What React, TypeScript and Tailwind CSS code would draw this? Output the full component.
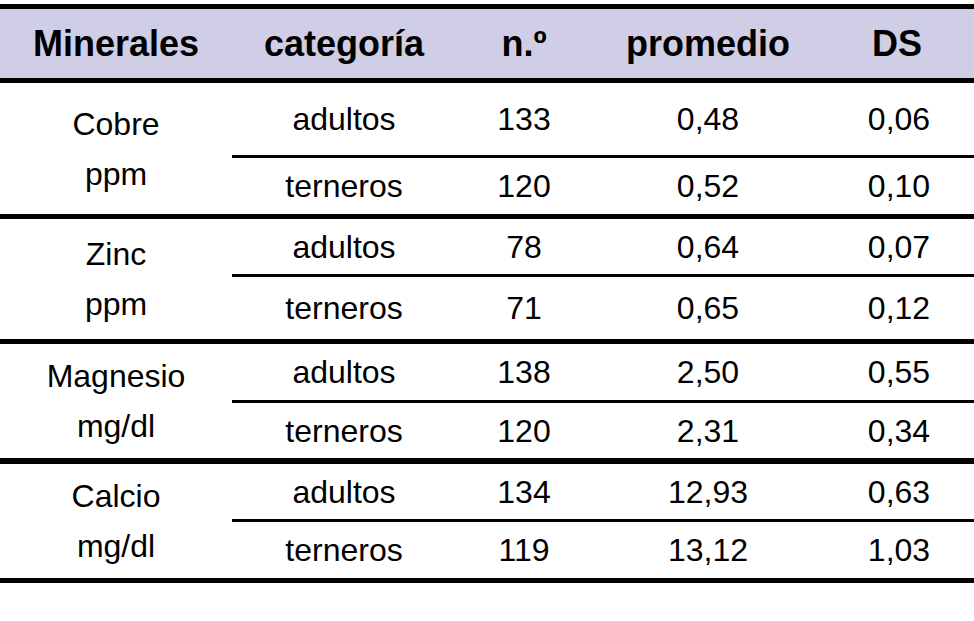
const groups = [
  {
    name: "Cobre",
    unit: "ppm",
    rows: [
      { cat: "adultos", n: "133", avg: "0,48", ds: "0,06", h: "h-[72px]" },
      { cat: "terneros", n: "120", avg: "0,52", ds: "0,10", h: "h-[59px]" },
    ],
    border: "border-b-[5px]",
  },
  {
    name: "Zinc",
    unit: "ppm",
    rows: [
      { cat: "adultos", n: "78", avg: "0,64", ds: "0,07", h: "h-[55px]" },
      { cat: "terneros", n: "71", avg: "0,65", ds: "0,12", h: "h-[65px]" },
    ],
    border: "border-b-[5px]",
  },
  {
    name: "Magnesio",
    unit: "mg/dl",
    rows: [
      { cat: "adultos", n: "138", avg: "2,50", ds: "0,55", h: "h-[56px]" },
      { cat: "terneros", n: "120", avg: "2,31", ds: "0,34", h: "h-[58px]" },
    ],
    border: "border-b-[6px]",
  },
  {
    name: "Calcio",
    unit: "mg/dl",
    rows: [
      { cat: "adultos", n: "134", avg: "12,93", ds: "0,63", h: "h-[55px]" },
      { cat: "terneros", n: "119", avg: "13,12", ds: "1,03", h: "h-[59px]" },
    ],
    border: "border-b-[5px]",
  },
];

export default function App() {
  return (
    <div className="w-[974px] h-[621px] bg-white pt-1 text-black font-['Liberation_Sans',Arial,sans-serif]">
      {/* Header */}
      <div className="flex h-[79px] items-center border-y-[5px] border-black bg-[#cfcee6] text-[36px] font-bold">
        <div className="w-[232px] text-center">Minerales</div>
        <div className="w-[224px] text-center">categoría</div>
        <div className="w-[136px] text-center">n.º</div>
        <div className="w-[232px] text-center">promedio</div>
        <div className="flex-1 text-center pr-[4px]">DS</div>
      </div>

      {/* Body */}
      {groups.map((g) => (
        <div key={g.name} className={`flex border-black ${g.border} text-[32px]`}>
          <div className="flex w-[232px] flex-col items-center justify-center leading-[50px]">
            <span>{g.name}</span>
            <span>{g.unit}</span>
          </div>
          <div className="flex flex-1 flex-col">
            {g.rows.map((r, i) => (
              <div
                key={r.cat}
                className={`flex items-center ${r.h} ${i > 0 ? "border-t-[3px] border-black" : ""}`}
              >
                <div className="w-[224px] text-center">{r.cat}</div>
                <div className="w-[136px] text-center">{r.n}</div>
                <div className="w-[232px] text-center">{r.avg}</div>
                <div className="flex-1 text-center">{r.ds}</div>
              </div>
            ))}
          </div>
        </div>
      ))}
    </div>
  );
}
